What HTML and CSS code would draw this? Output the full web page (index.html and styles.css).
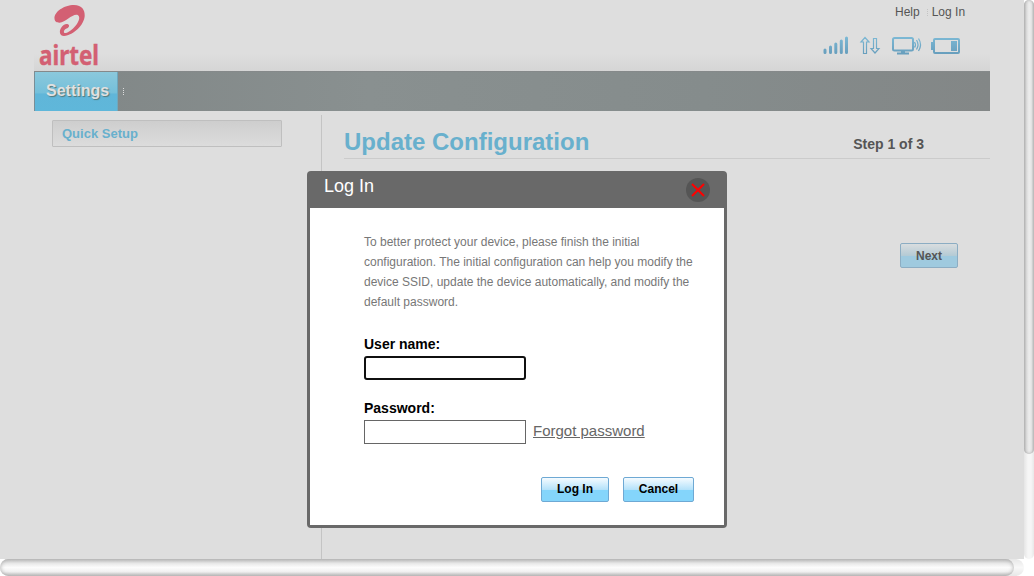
FILE: index.html
```html
<!DOCTYPE html>
<html lang="en">
<head>
<meta charset="utf-8">
<title>Update Configuration</title>
<link rel="stylesheet" href="styles.css">
</head>
<body>
<div class="window">
  <div class="page">
    <header class="header">
      <svg class="logo" width="80" height="71" viewBox="0 0 80 71">
        <path d="M20.500 18.500C20 12 30 5 40 5C48 5 51 10 50.700 16C50 25 40 35 30 36C25.500 36 25 31 27 28C29 24.500 32 23.300 34 24.200C36 25.500 35 27.500 32.500 28.500C30.500 29.500 29.500 31 30 32.500C31 34.300 36 31.500 40 27.500C44.500 23 47 17 43.800 15C39 13 32 22 25.500 22.700C22 22.700 20.700 21 20.500 18.500Z"/>
        <text x="5" y="64.500" textLength="60" lengthAdjust="spacingAndGlyphs">airtel</text>
      </svg>
      <div class="tools">
        <nav class="links"><a>Help</a><i></i><a>Log In</a></nav>
        <svg class="status" width="138" height="20" viewBox="0 0 138 20">
          <defs><linearGradient id="blue" x1="0" y1="0" x2="0" y2="20" gradientUnits="userSpaceOnUse"><stop offset="0" stop-color="#7dbad6"/><stop offset="1" stop-color="#659bba"/></linearGradient></defs>
          <g stroke="url(#blue)" fill="none">
            <path stroke-width="3" stroke-linecap="round" d="M2 14v2.500M7.500 11v5.500M12.800 8v8.500M18.300 5v11.500M23.500 2v14.500"/>
            <path stroke-width="1.200" d="M42 1.500l4 4.500h-2.500v11.500h-3v-11.500h-2.500zM50.500 2.500h3v10h2.500l-4 4.500-4-4.500h2.500z"/>
            <rect x="70" y="2" width="20" height="12.500" rx="1.500" stroke-width="2"/>
            <path stroke-width="2" d="M74 17.500h12M78 15.500h4"/>
            <path stroke-width="1.300" d="M91.500 6q2 3 0 5.500M93.500 4q3 4.500 0 9.500M95.500 2.500q4 6 0 12.500"/>
            <rect x="111" y="3" width="25" height="14" rx="1" stroke-width="2"/>
          </g>
          <path fill="url(#blue)" d="M108 6h3v8h-3zM128 5h6v10h-6z"/>
        </svg>
      </div>
    </header>
    <nav class="menu"><a class="tab">Settings</a><i class="dots"></i></nav>
    <main class="main">
      <aside class="side"><a class="side-item">Quick Setup</a></aside>
      <section class="content">
        <div class="heading"><h1>Update Configuration</h1><span class="step">Step 1 of 3</span></div>
        <button class="btn next">Next</button>
      </section>
    </main>
  </div>
  <div class="vbar"><div class="vthumb"></div></div>
  <div class="hbar"><div class="hthumb"></div></div>
  <div class="corner"></div>
</div>
<div class="dialog">
  <div class="dialog-head"><h2>Log In</h2>
    <svg width="24" height="24" viewBox="0 0 24 24"><circle cx="12" cy="12" r="12" fill="#555"/><path d="M6 6l12 12M18 6L6 18" stroke="#f00" stroke-width="2"/></svg>
  </div>
  <div class="dialog-body">
    <p class="intro">To better protect your device, please finish the initial<br>configuration. The initial configuration can help you modify the<br>device SSID, update the device automatically, and modify the<br>default password.</p>
    <label class="label">User name:</label>
    <div class="row"><input class="field focused" type="text"></div>
    <label class="label second">Password:</label>
    <div class="row"><input class="field" type="password"><a class="forgot">Forgot password</a></div>
    <div class="actions"><button class="btn login">Log In</button><button class="btn cancel">Cancel</button></div>
  </div>
</div>
</body>
</html>
```
FILE: styles.css
```css
* { box-sizing: border-box; }
body { margin: 0; width: 1034px; height: 576px; overflow: hidden; font-family: "Liberation Sans", Arial, sans-serif; background: #fff; }
.window { display: grid; grid-template: 559px 17px / 1024px 10px; }
.page { background: #dedede; padding: 0 34px; overflow: hidden; display: flex; flex-direction: column; }
.header { height: 71px; display: flex; justify-content: space-between; background: linear-gradient(#dedede 75%, #d5d5d5); }
.logo { fill: #d36073; overflow: visible; }
.logo text { font: bold 26px "Noto Sans", sans-serif; stroke: #d36073; stroke-width: 0.4px; }
.tools { width: 169px; padding-top: 5px; }
.links { display: flex; align-items: center; margin-left: 74px; font-size: 12px; line-height: 14px; height: 14px; color: #555; white-space: nowrap; }
.links i { width: 1px; height: 7px; margin: 0 4px 0 7px; border-left: 1px dotted #c4c4c4; }
.status { display: block; margin: 17px 0 0 2px; }
.menu { height: 40px; flex: none; display: flex; align-items: center; background: linear-gradient(90deg, #808686, #899090 35%, #858c8c 70%, #838787); border-top: 1px solid #85898a; }
.tab { width: 84px; height: 39px; border-left: 1px solid #798e97; border-right: 1px solid #6fa7bd; background: linear-gradient(#8bc9dc, #74bfda 54%, #60b6d9 56%, #5fb7da); color: #e0e0e0; font-size: 16px; font-weight: bold; line-height: 38px; padding-left: 11px; text-shadow: 1px 1px 1px #577; }
.dots { height: 7px; margin-left: 5px; border-left: 1px dotted #ddd; }
.main { display: flex; flex: 1; padding-top: 4px; }
.side { width: 288px; border-right: 1px solid #c4c4c4; padding: 5px 0 0 18px; }
.side-item { display: block; width: 230px; height: 27px; border: 1px solid #bfbfbf; border-radius: 1px; background: linear-gradient(#cecece, #dcdcdc); color: #68b0cd; font-size: 13px; font-weight: bold; line-height: 25px; padding-left: 9px; }
.content { flex: 1; padding-left: 22px; display: flex; flex-direction: column; }
.heading { height: 44px; border-bottom: 1px solid #cbcbcb; display: flex; justify-content: space-between; }
.heading h1 { margin: 13px 0 0; font-size: 24px; line-height: 28px; color: #68b0cd; }
.step { font-size: 14px; font-weight: bold; color: #555; line-height: 16px; margin: 21px 66px 0 0; }
.btn { border: 1px solid #6ea9d4; border-radius: 2px; background: linear-gradient(#f5fbff, #b5e2fa 50%, #84d5fb 53%, #84d5fb); font: bold 12px/14px "Liberation Sans", Arial, sans-serif; color: #000; padding: 0; height: 25px; }
.next { align-self: flex-end; width: 58px; margin: 84px 32px 0 0; border-color: #8cadc3; color: #555; background: linear-gradient(#d9dddf, #b5cbd5 50%, #9fcadf 53%, #9fcadf); }
.vbar { background: linear-gradient(90deg, #e5e5e5, #f6f6f6 40%, #f6f6f6 70%, #e8e8e8); border-radius: 5px; }
.vthumb { height: 454px; border-radius: 5px; background: linear-gradient(90deg, #b8b8b8, #dadada 25%, #ededed 50%, #e5e5e5 75%, #c0c0c0); box-shadow: inset 0 0 3px #aaa; }
.hbar { border-radius: 9px; background: linear-gradient(#e7e7e7, #f8f8f8 50%, #e7e7e7); }
.hthumb { width: 1014px; height: 17px; border-radius: 9px; background: linear-gradient(#c0c0c0, #e8e8e8 25%, #fcfcfc 50%, #f1f1f1 75%, #c0c0c0); box-shadow: inset 0 0 4px #aaa; }
.dialog { position: absolute; left: 307px; top: 171px; width: 420px; height: 357px; background: #696969; border-radius: 4px; padding: 0 3px 3px; }
.dialog-head { height: 37px; display: flex; justify-content: space-between; padding: 4px 14px 0; }
.dialog-head h2 { margin: 0; color: #fff; font-weight: normal; font-size: 18px; line-height: 22px; }
.dialog-head svg { margin-top: 3px; }
.dialog-body { height: 317px; background: #fff; padding: 24px 30px 0 54px; }
.intro { margin: 0; color: #777; font-size: 12px; line-height: 20px; white-space: nowrap; }
.label { display: block; margin-top: 24px; font-size: 14px; line-height: 16px; font-weight: bold; }
.second { margin-top: 20px; }
.row { display: flex; height: 24px; margin-top: 4px; }
.field { width: 162px; height: 24px; border: 1px solid #666; background: #fff; padding: 0; }
.focused { border: 2px solid #101010; border-radius: 3px; }
.forgot { margin: 2px 0 0 7px; color: #666; font-size: 15px; line-height: 18px; text-decoration: underline; }
.actions { display: flex; justify-content: flex-end; gap: 14px; margin-top: 33px; }
.actions .btn { padding-bottom: 2px; }
.login { width: 68px; }
.cancel { width: 71px; }
```
